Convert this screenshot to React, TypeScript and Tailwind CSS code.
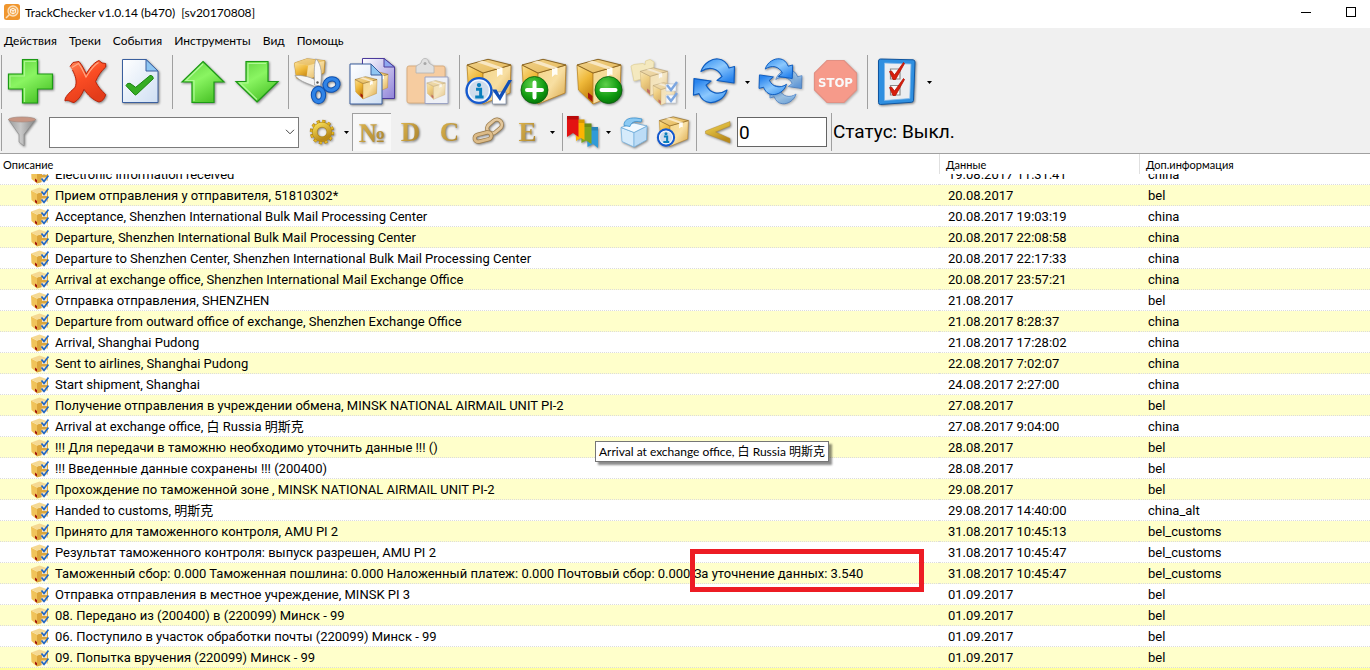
import { useLayoutEffect, useRef, useState, type ReactNode } from 'react';

interface TrackEvent {
  text: string;
  date: string;
  info: string;
  /** Part of the description that is outlined with a red frame */
  marked?: string;
}

const EVENTS: TrackEvent[] = [
  { text: 'Electronic information received', date: '19.08.2017 11:31:41', info: 'china' },
  { text: 'Прием отправления у отправителя, 51810302*', date: '20.08.2017', info: 'bel' },
  { text: 'Acceptance, Shenzhen International Bulk Mail Processing Center', date: '20.08.2017 19:03:19', info: 'china' },
  { text: 'Departure, Shenzhen International Bulk Mail Processing Center', date: '20.08.2017 22:08:58', info: 'china' },
  { text: 'Departure to Shenzhen Center, Shenzhen International Bulk Mail Processing Center', date: '20.08.2017 22:17:33', info: 'china' },
  { text: 'Arrival at exchange office, Shenzhen International Mail Exchange Office', date: '20.08.2017 23:57:21', info: 'china' },
  { text: 'Отправка отправления, SHENZHEN', date: '21.08.2017', info: 'bel' },
  { text: 'Departure from outward office of exchange, Shenzhen Exchange Office', date: '21.08.2017 8:28:37', info: 'china' },
  { text: 'Arrival, Shanghai Pudong', date: '21.08.2017 17:28:02', info: 'china' },
  { text: 'Sent to airlines, Shanghai Pudong', date: '22.08.2017 7:02:07', info: 'china' },
  { text: 'Start shipment, Shanghai', date: '24.08.2017 2:27:00', info: 'china' },
  { text: 'Получение отправления в учреждении обмена, MINSK NATIONAL AIRMAIL UNIT PI-2', date: '27.08.2017', info: 'bel' },
  { text: 'Arrival at exchange office, 白 Russia 明斯克', date: '27.08.2017 9:04:00', info: 'china' },
  { text: '!!! Для передачи в таможню необходимо уточнить данные !!! ()', date: '28.08.2017', info: 'bel' },
  { text: '!!! Введенные данные сохранены !!! (200400)', date: '28.08.2017', info: 'bel' },
  { text: 'Прохождение по таможенной зоне , MINSK NATIONAL AIRMAIL UNIT PI-2', date: '29.08.2017', info: 'bel' },
  { text: 'Handed to customs, 明斯克', date: '29.08.2017 14:40:00', info: 'china_alt' },
  { text: 'Принято для таможенного контроля, AMU PI 2', date: '31.08.2017 10:45:13', info: 'bel_customs' },
  { text: 'Результат таможенного контроля: выпуск разрешен, AMU PI 2', date: '31.08.2017 10:45:47', info: 'bel_customs' },
  {
    text: 'Таможенный сбор: 0.000 Таможенная пошлина: 0.000 Наложенный платеж: 0.000 Почтовый сбор: 0.000 ',
    marked: 'За уточнение данных: 3.540',
    date: '31.08.2017 10:45:47',
    info: 'bel_customs',
  },
  { text: 'Отправка отправления в местное учреждение, MINSK PI 3', date: '01.09.2017', info: 'bel' },
  { text: '08. Передано из (200400) в (220099) Минск - 99', date: '01.09.2017', info: 'bel' },
  { text: '06. Поступило в участок обработки почты (220099) Минск - 99', date: '01.09.2017', info: 'bel' },
  { text: '09. Попытка вручения (220099) Минск - 99', date: '01.09.2017', info: 'bel' },
];

const MENU = ['Действия', 'Треки', 'События', 'Инструменты', 'Вид', 'Помощь'];

const UI_FONT = "font-['Lato','Noto_Sans_CJK_SC',sans-serif]";
const LIST_FONT = "font-['Roboto','Noto_Sans_CJK_SC',sans-serif]";

/* Gradients shared by all icons */
function IconDefs() {
  return (
    <svg className="absolute w-0 h-0" aria-hidden="true">
      <defs>
        <linearGradient id="green" x1="0" y1="0" x2="0.6" y2="1">
          <stop offset="0" stopColor="#5fcf3d" />
          <stop offset="0.5" stopColor="#8af562" />
          <stop offset="1" stopColor="#4fc72c" />
        </linearGradient>
        <linearGradient id="red" x1="0" y1="0" x2="0.5" y2="1">
          <stop offset="0" stopColor="#ff8a5c" />
          <stop offset="0.5" stopColor="#fb4d24" />
          <stop offset="1" stopColor="#e33c1a" />
        </linearGradient>
        <linearGradient id="paper" x1="0" y1="0" x2="1" y2="1">
          <stop offset="0" stopColor="#ffffff" />
          <stop offset="1" stopColor="#cfdff3" />
        </linearGradient>
        <linearGradient id="violet" x1="0" y1="0" x2="1" y2="1">
          <stop offset="0" stopColor="#ffffff" />
          <stop offset="1" stopColor="#8f82d8" />
        </linearGradient>
        <linearGradient id="boxTop" x1="0" y1="0" x2="1" y2="1">
          <stop offset="0" stopColor="#f0d28c" />
          <stop offset="1" stopColor="#e6b958" />
        </linearGradient>
        <linearGradient id="boxLeft" x1="0" y1="0" x2="0.4" y2="1">
          <stop offset="0" stopColor="#fbe095" />
          <stop offset="0.5" stopColor="#efb93a" />
          <stop offset="1" stopColor="#c58410" />
        </linearGradient>
        <linearGradient id="boxRight" x1="0" y1="0" x2="1" y2="1">
          <stop offset="0" stopColor="#f3d58a" />
          <stop offset="0.5" stopColor="#f8dfa2" />
          <stop offset="1" stopColor="#d9a646" />
        </linearGradient>
        <linearGradient id="blue" x1="0" y1="0" x2="0.7" y2="1">
          <stop offset="0" stopColor="#2f8df0" />
          <stop offset="0.5" stopColor="#8cc8fd" />
          <stop offset="1" stopColor="#2a85ee" />
        </linearGradient>
        <radialGradient id="disc" cx="0.4" cy="0.3" r="0.8">
          <stop offset="0" stopColor="#5fd04a" />
          <stop offset="0.6" stopColor="#0f9a10" />
          <stop offset="1" stopColor="#046b06" />
        </radialGradient>
        <linearGradient id="gold" x1="0" y1="0" x2="0.5" y2="1">
          <stop offset="0" stopColor="#f6dc58" />
          <stop offset="1" stopColor="#b98a1a" />
        </linearGradient>
        <linearGradient id="steel" x1="0" y1="0" x2="1" y2="0">
          <stop offset="0" stopColor="#9b9b9b" />
          <stop offset="0.45" stopColor="#c8c8c8" />
          <stop offset="1" stopColor="#868686" />
        </linearGradient>
      </defs>
    </svg>
  );
}

function BigIcon({ children, faded = false }: { children: ReactNode; faded?: boolean }) {
  return (
    <svg
      viewBox="0 0 48 48"
      className={`w-12 h-12 overflow-visible drop-shadow-[1px_1px_1px_rgba(0,0,0,0.45)] ${faded ? 'opacity-60' : ''}`}
      aria-hidden="true"
    >
      {children}
    </svg>
  );
}

function SmallIcon({ children }: { children: ReactNode }) {
  return (
    <svg viewBox="0 0 36 36" className="w-9 h-9 overflow-visible drop-shadow-[1px_1px_1px_rgba(0,0,0,0.45)]" aria-hidden="true">
      {children}
    </svg>
  );
}

/* Cardboard box in a 48 unit square */
function Box({ transform, label = false }: { transform?: string; label?: boolean }) {
  return (
    <g transform={transform} strokeLinejoin="round">
      <path d="M2 7 18 15V46L3.5 32Z" fill="url(#boxLeft)" stroke="#c08a22" strokeWidth="0.8" />
      <path d="M18 15 46 7 45 35 18 46Z" fill="url(#boxRight)" stroke="#b98024" strokeWidth="0.8" />
      <path d="M2 7 23 1.3 46 7 18 15Z" fill="url(#boxTop)" stroke="#8a6420" strokeWidth="1" />
      <path d="M12 4.3 32 11 37.5 9.5 18 2.7Z" fill="#f8e7c4" />
      <path d="M32 11 37.5 9.5V17L35 16.5 32 19Z" fill="#fffdf6" />
      {label && <path d="M13 34.5 17.5 38V44L13 40Z" fill="#a3160c" />}
    </g>
  );
}

function Info({ cx, cy, r }: { cx: number; cy: number; r: number }) {
  return (
    <g>
      <circle cx={cx} cy={cy} r={r - 1.5} fill="#cfdcec" stroke="#1459cf" strokeWidth={r / 4.2} />
      <circle cx={cx} cy={cy} r={r - 3} fill="none" stroke="#f4f8fd" strokeWidth={r / 9} />
      <circle cx={cx} cy={cy - r * 0.4} r={r * 0.16} fill="#0a7fbd" />
      <path
        d={`M${cx - r * 0.22} ${cy - r * 0.1}H${cx + r * 0.12}V${cy + r * 0.46}M${cx - r * 0.28} ${cy + r * 0.48}H${cx + r * 0.34}`}
        fill="none"
        stroke="#0a7fbd"
        strokeWidth={r * 0.22}
      />
    </g>
  );
}

function PlusIcon() {
  return (
    <BigIcon>
      <path d="M15.5 1.5h15V16h15v15h-15v14h-15V31h-14V16h14Z" fill="url(#green)" stroke="#1c9a15" strokeWidth="1.2" />
      <path d="M17.5 30V44M3 29V18H17.5V3.5H29" fill="none" stroke="#a9f78d" strokeWidth="1.2" />
    </BigIcon>
  );
}

function CrossIcon() {
  return (
    <BigIcon>
      <path
        d="M8 8.5 11 4.500 17 3.500C20 7 22 11 24.300 16 27 11 31 5 37 2.500L40 5 43.700 5.500V9C39 13 36 18 33.500 23.500 36 29 39.500 32.500 43.700 36.500 42.500 40.500 41 43 37 44 30 41.500 26 37 22 31.300 20 36 17 42 12 44.500 9 44.500 6 41 3 43 2.500 39 7 35 13 29.500 15.500 23.700 13.500 18 10.500 12 8 8.500Z"
        fill="url(#red)"
        stroke="#b92309"
        strokeWidth="1"
        strokeLinejoin="round"
      />
      <path d="M10 9.500 16.500 5.500C20 10 21.500 14 24 19 28 13 31 7.500 36.500 4.500" fill="none" stroke="#ffa884" strokeWidth="1.200" />
    </BigIcon>
  );
}

function DocCheckIcon() {
  return (
    <BigIcon>
      <path d="M5.500 1.500H29L41 13V44.500H5.500Z" fill="url(#paper)" stroke="#3a5f9e" strokeWidth="1" />
      <path d="M29 1.500V13H41Z" fill="#8fc6f2" stroke="#3a5f9e" strokeWidth="1" />
      <path d="M9 27.700Q10 24.500 13 25.300L18.700 29.300 33 17.500Q36 17 36.300 20.700L19.500 36.500Q18.500 37.500 17.500 36.500Z" fill="#35ad23" stroke="#1b8312" strokeWidth="1" strokeLinejoin="round" />
    </BigIcon>
  );
}

function UpIcon() {
  return (
    <BigIcon>
      <path d="M25 3.500 46 24H36V44.500H14V24H4Z" fill="url(#green)" stroke="#1c9a15" strokeWidth="1.200" />
      <path d="M16 43V22.500H8L25 6" fill="none" stroke="#b0f898" strokeWidth="1.200" />
    </BigIcon>
  );
}

function DownIcon() {
  return (
    <BigIcon>
      <path d="M24 44 45 23.500H35V3.500H13V23.500H3Z" fill="url(#green)" stroke="#1c9a15" strokeWidth="1.200" />
      <path d="M24 41.500 7 25H15V5.500H33" fill="none" stroke="#b0f898" strokeWidth="1.200" />
    </BigIcon>
  );
}

function CutIcon() {
  return (
    <BigIcon>
      <path d="M.5 5 13 .8 31 2.700 30 15 12 23 2.500 20Z" fill="url(#boxRight)" stroke="#c08a22" strokeWidth="0.800" />
      <path d="M.5 5 13 .8 31 2.700 14 7.500Z" fill="url(#boxTop)" />
      <path d="M.5 5 14 7.500 12 23 2.500 20Z" fill="url(#boxLeft)" />
      <path d="M1 17.500C9 17 18 19 26 24.500L22 29C16 26 6 24 1 17.500Z" fill="#f5f5f5" stroke="#9a9a9a" strokeWidth="0.700" />
      <path d="M22 .8C28 7 28 17 26.500 28L20.500 27C20.500 18 19.500 8 22 .8Z" fill="#f8f8f8" stroke="#9a9a9a" strokeWidth="0.700" />
      <ellipse cx="37.500" cy="26.500" rx="6.500" ry="5.500" transform="rotate(-15 37.500 26.500)" fill="none" stroke="#0d4fae" strokeWidth="5.400" />
      <ellipse cx="37.500" cy="26.500" rx="6.500" ry="5.500" transform="rotate(-15 37.500 26.500)" fill="none" stroke="#2f83e6" strokeWidth="3.400" />
      <ellipse cx="24.500" cy="37" rx="5" ry="6.500" fill="none" stroke="#0d4fae" strokeWidth="5.400" />
      <ellipse cx="24.500" cy="37" rx="5" ry="6.500" fill="none" stroke="#2f83e6" strokeWidth="3.400" />
      <circle cx="23.500" cy="24.500" r="1.200" fill="#555" />
    </BigIcon>
  );
}

function CopyIcon() {
  return (
    <BigIcon>
      <path d="M13.500.5H35L45.500 9V40.500H13.500Z" fill="url(#violet)" stroke="#4c3a9c" strokeWidth="1" />
      <path d="M35 .5V9H45.500Z" fill="#8fa8f0" stroke="#4c3a9c" strokeWidth="1" />
      <Box transform="translate(17 13) scale(.48)" />
      <path d="M1 6H22L33 17V46H1Z" fill="url(#paper)" stroke="#3a5f9e" strokeWidth="1" />
      <path d="M22 6V17H33Z" fill="#8fc6f2" stroke="#3a5f9e" strokeWidth="1" />
      <Box transform="translate(5 18) scale(.5)" label />
    </BigIcon>
  );
}

function PasteIcon() {
  return (
    <BigIcon faded>
      <rect x="3" y="8" width="38" height="37" rx="2" fill="#fbb56c" stroke="#c98236" strokeWidth="1" />
      <path d="M12 15V9C12 7 16 6.500 17 5 17.500 2 19 .5 21 .5S24.500 2 25 5C26 6.500 30 7 30 9V15Z" fill="#d6d6d6" stroke="#8b8b8b" strokeWidth="0.800" />
      <circle cx="21" cy="5.500" r="1.500" fill="#777" />
      <path d="M21 19H44V45.500H21Z" fill="#eef1fa" stroke="#6471a8" strokeWidth="1" />
      <Box transform="translate(22 22) scale(.42)" label />
    </BigIcon>
  );
}

function BoxInfoIcon() {
  return (
    <BigIcon>
      <Box />
      <path d="M27.500 34H41V46H27.500Z" fill="#fff" stroke="#8090a8" strokeWidth="0.800" />
      <path d="M27 31.500H31.500L34.500 37 43.500 22H47L35 43Z" fill="#1150b8" />
      <Info cx={14} cy={32.500} r={13.500} />
    </BigIcon>
  );
}

function BoxAddIcon() {
  return (
    <BigIcon>
      <Box />
      <circle cx="14.500" cy="32" r="13.500" fill="url(#disc)" stroke="#075c0b" strokeWidth="0.800" />
      <path d="M14.500 24.500V39.500M7 32H22" stroke="#fff" strokeWidth="4" strokeLinecap="round" />
    </BigIcon>
  );
}

function BoxRemoveIcon() {
  return (
    <BigIcon>
      <Box label />
      <circle cx="33.500" cy="32" r="13.500" fill="url(#disc)" stroke="#075c0b" strokeWidth="0.800" />
      <path d="M26.500 32H40.500" stroke="#fff" strokeWidth="4" strokeLinecap="round" />
    </BigIcon>
  );
}

function BoxesIcon() {
  return (
    <BigIcon faded>
      <path d="M1 8 4 6.500 13 5.500 15 7 15.500 3 20 1.500 24 4 23 18 4 23Z" fill="#f7e6a0" stroke="#d9bf62" strokeWidth="0.800" />
      <Box transform="translate(9 9) scale(.62)" label />
      <Box transform="translate(22 24) scale(.5)" label />
      <path d="M36 26H46V33H36ZM36 37H46V45H36Z" fill="#fff" stroke="#9fb0c8" strokeWidth="0.600" />
      <path d="M37 27 41 32 47 24M37 38 41 43 47 35" fill="none" stroke="#2f76d8" strokeWidth="2.400" />
    </BigIcon>
  );
}

function ArrowPair({ transform }: { transform?: string }) {
  const arc = 'M10 13.500C13 4 22 .5 27 1 33 1.500 36 5 38 10L43.500 8.500 43 25 26 22.500 31 18.500C27 10 18 8 10 13.500Z';
  return (
    <g transform={transform} fill="url(#blue)" stroke="#0d5cc0" strokeWidth="1.200" strokeLinejoin="round">
      <path d={arc} />
      <path d={arc} transform="rotate(180 23 22.800)" />
    </g>
  );
}

function RefreshIcon() {
  return (
    <BigIcon>
      <ArrowPair />
    </BigIcon>
  );
}

function RefreshAllIcon() {
  return (
    <BigIcon>
      <g opacity="0.600">
        <ArrowPair transform="translate(11 11) scale(.78)" />
      </g>
      <ArrowPair transform="scale(.82)" />
    </BigIcon>
  );
}

function StopIcon() {
  return (
    <BigIcon faded>
      <path d="M15 2.500H32L44.500 15V32L32 44.500H15L2.500 32V15Z" fill="#fb6248" stroke="#d9523c" strokeWidth="1.200" />
      <text x="23.500" y="28.500" textAnchor="middle" className="fill-white text-[13px] font-bold font-['DejaVu_Sans_Condensed',sans-serif]">
        STOP
      </text>
    </BigIcon>
  );
}

function ChecklistIcon() {
  return (
    <BigIcon>
      <path d="M7.500 1 40 1.800Q42 2 42 4L40.500 42.500Q40.500 44 38.500 44.300L7.500 46.500Q5.500 46.500 5.500 44.500V3Q5.500 1 7.500 1Z" fill="#2f8fe0" stroke="#0f559f" strokeWidth="1" />
      <path d="M11.500 5 38 6 36.800 40.500 11.500 42.500Z" fill="#eceef1" stroke="#7fb8ea" strokeWidth="0.800" />
      <path d="M17.500 11H27V21H17.500ZM17.500 27.500H27V37H17.500Z" fill="#f9f9f9" stroke="#8b8b8b" strokeWidth="1.200" />
      <path d="M16.500 13.500 18.500 13 21.500 17 30.500 4.500 31.500 5.500 22.500 21.500H20ZM16.500 29.500 18.500 29 21.500 33 30.500 20.500 31.500 21.500 22.500 37.500H20Z" fill="#d81e0c" stroke="#b31205" strokeWidth="0.800" />
    </BigIcon>
  );
}

function FunnelIcon() {
  return (
    <SmallIcon>
      <path d="M3.500 5.500 14 20.500V28L19 32V20.500L30.500 5.500Z" fill="url(#steel)" stroke="#858585" strokeWidth="0.600" />
      <ellipse cx="17" cy="5.500" rx="13.500" ry="2.500" fill="#c79684" stroke="#a58578" strokeWidth="0.600" />
    </SmallIcon>
  );
}

function GearIcon() {
  return (
    <SmallIcon>
      <circle cx="18" cy="18" r="10.500" fill="none" stroke="#a87b12" strokeWidth="3.400" strokeDasharray="3 2.498" />
      <circle cx="18" cy="18" r="10.500" fill="none" stroke="#e3b722" strokeWidth="2.400" strokeDasharray="2.400 3.098" />
      <circle cx="18" cy="18" r="7.300" fill="none" stroke="#b3860f" strokeWidth="5.400" />
      <circle cx="18" cy="18" r="7.300" fill="none" stroke="url(#gold)" strokeWidth="4.200" />
    </SmallIcon>
  );
}

function ChainIcon() {
  return (
    <SmallIcon>
      <g fill="none">
        <rect x="15.500" y="7.500" width="16" height="10" rx="5" transform="rotate(-40 23.500 12.500)" stroke="#9a7a48" strokeWidth="4.200" />
        <rect x="15.500" y="7.500" width="16" height="10" rx="5" transform="rotate(-40 23.500 12.500)" stroke="#e3c79c" strokeWidth="2.800" />
        <rect x="3.500" y="19.500" width="17" height="7" rx="3.500" transform="rotate(-14 12 23)" stroke="#9a7a48" strokeWidth="4.200" />
        <rect x="3.500" y="19.500" width="17" height="7" rx="3.500" transform="rotate(-14 12 23)" stroke="#dcbb88" strokeWidth="2.800" />
      </g>
    </SmallIcon>
  );
}

function FlagsIcon() {
  return (
    <SmallIcon>
      <path d="M20.500 13H32V34L27 30 21.500 33Z" fill="#2f9bd8" />
      <path d="M14.500 9.500H25.500V30L20 26.500 15.500 29Z" fill="#7ea51c" />
      <path d="M8 5.500H18.500V26L15 24 10 27V24Z" fill="#fbb403" />
      <path d="M1 2H12.500V23L7 19 1 23Z" fill="#e31212" />
      <path d="M1 2H12.500V5.500H1Z" fill="#b90a0a" />
      <path d="M12.500 5.500H18.500V9H12.500ZM18.500 9.500H25.500V13H18.500ZM25.500 13H32V16.500H25.500Z" fill="#000" opacity="0.150" />
    </SmallIcon>
  );
}

function BlueBoxIcon() {
  return (
    <SmallIcon>
      <path d="M5 13.500 18 18.500V33L6 27.500Z" fill="#d6ebfb" stroke="#79b4e0" strokeWidth="0.800" />
      <path d="M18 18.500 31 12 30.500 26 18 33Z" fill="#bcdcf6" stroke="#79b4e0" strokeWidth="0.800" />
      <path d="M5 13.500 18 9 31 12 18 18.500Z" fill="#f2f9fe" stroke="#6aa9d9" strokeWidth="0.800" />
      <path d="M8 11.500C8 6 12 3.500 20 4L26 5 25 8C19 6.500 15 8 14 12.500Z" fill="#8ccaf3" stroke="#3b93d0" strokeWidth="0.800" />
    </SmallIcon>
  );
}

function SmallBoxInfoIcon() {
  return (
    <SmallIcon>
      <Box transform="translate(3 2) scale(.66)" />
      <Info cx={11} cy={23.500} r={9.500} />
    </SmallIcon>
  );
}

function LessIcon() {
  return (
    <SmallIcon>
      <path d="M30 7.500V12L15.500 18 30 24.500V29L5.500 19.500V17Z" fill="url(#gold)" stroke="#b58a2e" strokeWidth="0.500" />
    </SmallIcon>
  );
}

/* Gold serif letter used by the column toggles */
function Letter({ children }: { children: string }) {
  return (
    <span className="font-['Liberation_Serif',serif] font-bold text-[27px] leading-9 text-transparent bg-clip-text bg-linear-to-br from-[#e3bb52] to-[#a37c28] drop-shadow-[1px_1px_1px_rgba(0,0,0,0.5)]">
      {children}
    </span>
  );
}

function RowIcon() {
  return (
    <svg viewBox="0 0 18 18" className="w-[18px] h-[18px] shrink-0" aria-hidden="true">
      <path d="M0 3.500 6 6.500V17.500L.5 13Z" fill="#f0c35a" />
      <path d="M6 6.500 17 3.500V14.500L6 17.500Z" fill="#dca63c" />
      <path d="M0 3.500 8.500 .5 17 3.500 6 6.500Z" fill="#f5d993" />
      <path d="M4 12.500 6 14V16.800L4 15.300Z" fill="#a3160c" />
      <path d="M10.500 11.500H16.500V17.500H10.500ZM11 4.500H16V9H11Z" fill="#fff" opacity="0.700" />
      <path d="M10.500 4.500 13 7.500 17.500 1.500M10.500 12.500 13 15.500 17.500 9.500" fill="none" stroke="#1f66c4" strokeWidth="1.700" />
    </svg>
  );
}

function ToolGroup({ children }: { children: ReactNode }) {
  return (
    <div className="flex items-center self-stretch pl-1 pr-0.5 relative before:content-[''] before:self-stretch before:w-px before:bg-[#a0a0a0] before:-ml-0.5 before:mr-px">
      {children}
    </div>
  );
}

function BigButton({ label, children }: { label: string; children: ReactNode }) {
  return (
    <button type="button" aria-label={label} className="w-[55px] h-full flex items-center justify-center hover:bg-[#e5f1fb]">
      {children}
    </button>
  );
}

function SmallButton({ label, pressed = false, children }: { label: string; pressed?: boolean; children: ReactNode }) {
  return (
    <button
      type="button"
      aria-label={label}
      className={`w-[39px] h-full flex items-center justify-center ${
        pressed ? 'bg-[#f8f8f8] border-t border-l border-[#a0a0a0]' : 'hover:bg-[#e5f1fb]'
      }`}
    >
      {children}
    </button>
  );
}

function DropButton({ label }: { label: string }) {
  return (
    <button type="button" aria-label={label} className="w-[11px] h-full flex items-center justify-center">
      <svg viewBox="0 0 5 3" className="w-[5px] h-[3px]" aria-hidden="true">
        <path d="M0 0H5L2.500 3Z" fill="#000" />
      </svg>
    </button>
  );
}

function TitleBar() {
  return (
    <header className="h-7 bg-white flex items-center pl-1">
      <svg viewBox="0 0 16 16" className="w-4 h-4 mb-1" aria-hidden="true">
        <rect width="16" height="16" rx="2.500" fill="#f0962e" />
        <circle cx="9" cy="7" r="5" fill="#f5ac55" stroke="#fbe0bd" strokeWidth="1.300" />
        <path d="M5.300 10.700 2 14" stroke="#fbe0bd" strokeWidth="1.500" />
        <path d="M9 4.300 11.500 5.500V8.500L9 9.800 6.500 8.500V5.500ZM6.500 5.500 9 6.800 11.500 5.500M9 6.800V9.800" fill="none" stroke="#fff" strokeWidth="0.800" />
      </svg>
      <h1 className="ml-[5px] pb-0.5 text-xs whitespace-pre">TrackChecker v1.0.14 (b470)  [sv20170808]</h1>
      <div className="ml-auto flex self-stretch pb-1">
        <button type="button" aria-label="Свернуть" className="w-[52px] flex items-center justify-center">
          <span className="w-2.5 h-px bg-black" />
        </button>
        <button type="button" aria-label="Развернуть" className="w-[38px] flex items-center justify-center">
          <span className="w-2.5 h-2.5 border border-black" />
        </button>
      </div>
    </header>
  );
}

function Toolbars() {
  const [filter, setFilter] = useState('');
  const [days, setDays] = useState('0');

  return (
    <div className="border-b border-[#a0a0a0] pb-0.5">
      <div className="flex h-[54px] -ml-px">
        <ToolGroup>
          <BigButton label="Добавить"><PlusIcon /></BigButton>
          <BigButton label="Удалить"><CrossIcon /></BigButton>
          <BigButton label="Отметить"><DocCheckIcon /></BigButton>
        </ToolGroup>
        <ToolGroup>
          <BigButton label="Вверх"><UpIcon /></BigButton>
          <BigButton label="Вниз"><DownIcon /></BigButton>
        </ToolGroup>
        <ToolGroup>
          <BigButton label="Вырезать"><CutIcon /></BigButton>
          <BigButton label="Копировать"><CopyIcon /></BigButton>
          <BigButton label="Вставить"><PasteIcon /></BigButton>
        </ToolGroup>
        <ToolGroup>
          <BigButton label="Свойства трека"><BoxInfoIcon /></BigButton>
          <BigButton label="Добавить трек"><BoxAddIcon /></BigButton>
          <BigButton label="Удалить трек"><BoxRemoveIcon /></BigButton>
          <BigButton label="В архив"><BoxesIcon /></BigButton>
        </ToolGroup>
        <ToolGroup>
          <BigButton label="Проверить"><RefreshIcon /></BigButton>
          <DropButton label="Варианты проверки" />
          <BigButton label="Проверить все"><RefreshAllIcon /></BigButton>
          <BigButton label="Остановить"><StopIcon /></BigButton>
        </ToolGroup>
        <ToolGroup>
          <BigButton label="Настройки"><ChecklistIcon /></BigButton>
          <DropButton label="Варианты настроек" />
        </ToolGroup>
      </div>

      <div className="flex h-[38px] mt-1 -ml-px">
        <ToolGroup>
          <SmallButton label="Фильтр"><FunnelIcon /></SmallButton>
          <div className="relative ml-[7px] mr-[3px]">
            <select
              aria-label="Текст фильтра"
              value={filter}
              onChange={(e) => setFilter(e.target.value)}
              className="appearance-none block w-[250px] h-[31px] bg-white border border-[#7a7a7a] px-1 text-sm"
            >
              <option value=""></option>
            </select>
            <svg viewBox="0 0 10 6" className="absolute right-1 top-3 w-2.5 h-1.5 pointer-events-none" aria-hidden="true">
              <path d="M1 .8 5 4.800 9 .8" fill="none" stroke="#444" />
            </svg>
          </div>
          <SmallButton label="Параметры"><GearIcon /></SmallButton>
          <DropButton label="Варианты параметров" />
          <SmallButton label="Номер" pressed><Letter>№</Letter></SmallButton>
          <SmallButton label="Описание"><Letter>D</Letter></SmallButton>
          <SmallButton label="Комментарий"><Letter>C</Letter></SmallButton>
          <SmallButton label="Ссылка"><ChainIcon /></SmallButton>
          <SmallButton label="События"><Letter>E</Letter></SmallButton>
          <DropButton label="Варианты столбцов" />
        </ToolGroup>
        <ToolGroup>
          <SmallButton label="Метки"><FlagsIcon /></SmallButton>
          <DropButton label="Варианты меток" />
          <SmallButton label="Новые"><BlueBoxIcon /></SmallButton>
          <SmallButton label="Сведения"><SmallBoxInfoIcon /></SmallButton>
        </ToolGroup>
        <ToolGroup>
          <SmallButton label="Меньше"><LessIcon /></SmallButton>
          <input
            aria-label="Дней"
            value={days}
            onChange={(e) => setDays(e.target.value)}
            className={`w-[90px] h-[30px] bg-white border border-[#646464] px-px text-[19px] ${LIST_FONT}`}
          />
        </ToolGroup>
        <ToolGroup>
          <span className={`text-[19px] ${LIST_FONT}`}>Статус: Выкл.</span>
        </ToolGroup>
      </div>
    </div>
  );
}

function EventTable() {
  const bodyRef = useRef<HTMLTableSectionElement>(null);

  // The list is scrolled by half a row
  useLayoutEffect(() => {
    if (bodyRef.current) bodyRef.current.scrollTop = 10;
  }, []);

  const headCell = `h-5 p-0 pt-0.5 text-left font-normal text-[11px] leading-[18px] ${UI_FONT}`;
  const cell = 'h-[21px] p-0 pt-px leading-[19px] whitespace-pre border-b border-dotted border-[#dcdcdc]';

  return (
    <table className={`flex flex-col h-full bg-white text-[13px] ${LIST_FONT}`}>
      <thead className="block">
        <tr className="table w-full table-fixed border-separate border-spacing-0">
          <th className={`${headCell} pl-[3px]`}>Описание</th>
          <th className={`${headCell} w-[200px] border-l border-[#e0e0e0] pl-1.5`}>Данные</th>
          <th className={`${headCell} w-[231px] border-l border-[#e0e0e0] pl-1.5`}>Доп.информация</th>
        </tr>
      </thead>
      <tbody ref={bodyRef} className="block flex-1 min-h-0 overflow-hidden">
        {EVENTS.map((event) => (
          <tr key={event.text} className="table w-full table-fixed border-separate border-spacing-0 even:bg-[#ffffcb]">
            <td className={cell}>
              <div className="flex items-center pl-[31px] gap-1.5">
                <RowIcon />
                <span>
                  {event.text}
                  {event.marked && (
                    <span className="relative">
                      {event.marked}
                      <span className="absolute -left-1 -top-[17px] w-[234px] h-[43px] border-5 border-[#ed1c24]" />
                    </span>
                  )}
                </span>
              </div>
            </td>
            <td className={`${cell} w-[200px]`}>
              <div className="pl-[9px]">{event.date}</div>
            </td>
            <td className={`${cell} w-[231px]`}>
              <div className="pl-[9px]">{event.info}</div>
            </td>
          </tr>
        ))}
        <tr className="table w-full bg-[#ffff99]">
          <td className="h-[21px] p-0" />
        </tr>
      </tbody>
    </table>
  );
}

export default function App() {
  return (
    <div className={`h-screen flex flex-col bg-[#f0f0f0] text-black ${UI_FONT}`}>
      <IconDefs />
      <TitleBar />
      <nav className="h-[27px] pb-0.5 flex items-center gap-3 px-1">
        {MENU.map((item) => (
          <button key={item} type="button" className="text-xs">
            {item}
          </button>
        ))}
      </nav>
      <Toolbars />
      <main className="flex-1 min-h-0 relative">
        <EventTable />
        <div
          role="tooltip"
          className="absolute left-[595px] top-[287px] px-[3px] h-[21px] leading-[19px] text-xs whitespace-nowrap bg-white border border-[#767676] shadow-[3px_3px_2px_rgba(0,0,0,0.45)]"
        >
          Arrival at exchange office, 白 Russia 明斯克
        </div>
      </main>
    </div>
  );
}
